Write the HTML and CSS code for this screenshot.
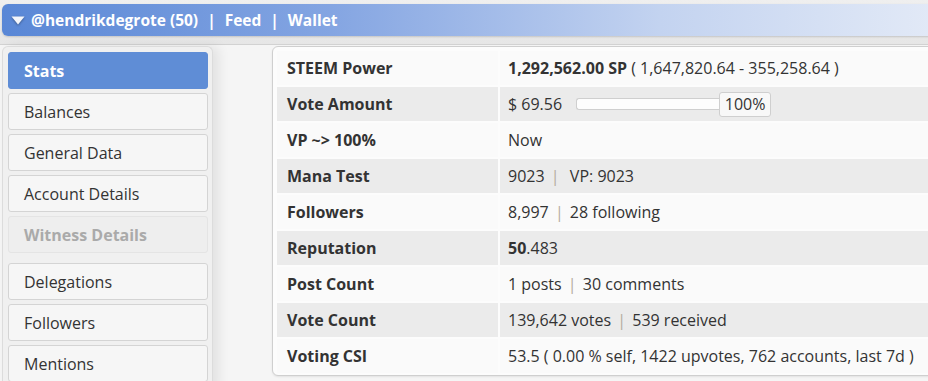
FILE: index.html
```html
<!DOCTYPE html>
<html>
<head>
<meta charset="utf-8">
<link rel="stylesheet" href="styles.css">
</head>
<body>
<div class="top">
  <div class="header">
    <svg class="caret" width="14" height="9" viewBox="0 0 14 9"><path d="M0.5 0.5 H13.5 L7 8.5 Z" fill="#f4f6fb"/></svg>
    <span class="htext">@hendrikdegrote (50)</span>
    <span class="hsep">|</span>
    <span class="htext">Feed</span>
    <span class="hsep">|</span>
    <span class="htext">Wallet</span>
  </div>
</div>
<div class="content">
  <nav class="sidebar">
    <div class="btn active">Stats</div>
    <div class="btn">Balances</div>
    <div class="btn">General Data</div>
    <div class="btn">Account Details</div>
    <div class="btn disabled">Witness Details</div>
    <div class="btn group">Delegations</div>
    <div class="btn">Followers</div>
    <div class="btn">Mentions</div>
  </nav>
  <main class="card">
    <table class="stats">
      <tr><th>STEEM Power</th><td><b>1,292,562.00 SP</b> ( 1,647,820.64 - 355,258.64 )</td></tr>
      <tr><th>Vote Amount</th><td><div class="vote"><span>$ 69.56</span><span class="bar"></span><span class="pct">100%</span></div></td></tr>
      <tr><th>VP ~&gt; 100%</th><td>Now</td></tr>
      <tr><th>Mana Test</th><td>9023 <span class="sep">|</span> &nbsp;VP: 9023</td></tr>
      <tr><th>Followers</th><td>8,997 <span class="sep">|</span> 28 following</td></tr>
      <tr><th>Reputation</th><td><b>50</b>.483</td></tr>
      <tr><th>Post Count</th><td>1 posts <span class="sep">|</span> 30 comments</td></tr>
      <tr><th>Vote Count</th><td>139,642 votes <span class="sep">|</span> 539 received</td></tr>
      <tr><th>Voting CSI</th><td>53.5 ( 0.00 % self, 1422 upvotes, 762 accounts, last 7d )</td></tr>
    </table>
  </main>
</div>
</body>
</html>
```

FILE: styles.css
```css
html, body {
  margin: 0;
  padding: 0;
  overflow: hidden;
}
body {
  width: 928px;
  height: 381px;
  background: #f5f5f5;
  font-family: "Open Sans", "DejaVu Sans", sans-serif;
  font-size: 16px;
  color: #333;
}
.top {
  height: 45px;
  box-sizing: border-box;
  padding: 4px 0 0 2px;
  background: linear-gradient(#efefef, #e6e6e6);
  border-bottom: 1px solid #d2d2d2;
}
.header {
  height: 32px;
  width: 940px;
  box-sizing: border-box;
  border-radius: 6px 0 0 6px;
  background: linear-gradient(to right, #5987d6 0%, #84a5e2 35%, #c3d3f0 70%, #e3eaf7 100%);
  display: flex;
  align-items: center;
  padding-left: 9px;
  color: #fff;
  font-weight: 700;
  font-size: 15.5px;
  box-shadow: 0 1px 2px rgba(0,0,0,0.15);
}
.caret {
  margin-right: 6px;
  margin-top: 1px;
  filter: drop-shadow(0 1px 1px rgba(0,0,0,0.35));
}
.hsep {
  margin: 0 9px;
}
.content {
  display: flex;
  align-items: flex-start;
}
.sidebar {
  flex: none;
  width: 211px;
  height: 345px;
  box-sizing: border-box;
  margin-left: 2px;
  margin-top: 1px;
  padding: 5px 4px 0 5px;
  background: #f0f0f0;
  border: 1px solid #dcdcdc;
  border-bottom: none;
  border-radius: 6px 6px 0 0;
  box-shadow: 6px 0 12px rgba(0,0,0,0.08);
  display: flex;
  flex-direction: column;
  gap: 4px;
}
.btn {
  height: 37px;
  flex: none;
  box-sizing: border-box;
  border: 1px solid #d4d4d4;
  border-radius: 3px;
  background: #f6f6f6;
  padding-left: 15px;
  display: flex;
  align-items: center;
  color: #333;
}
.btn.active {
  background: #5f8dd6;
  border-color: #5f8dd6;
  color: #fff;
  font-weight: 700;
}
.btn.disabled {
  background: #eeeeee;
  border-color: #e4e4e4;
  color: #aaa;
  font-weight: 700;
}
.btn.group {
  margin-top: 6px;
}
.card {
  flex: none;
  margin-left: 59px;
  margin-top: 1px;
  width: 680px;
  box-sizing: border-box;
  background: #fcfcfc;
  border: 1px solid #cfcfcf;
  border-radius: 6px;
  padding: 2px 0 0 2px;
  box-shadow: 0 1px 2px rgba(0,0,0,0.08);
}
.stats {
  border-collapse: separate;
  border-spacing: 2px;
  width: 100%;
}
.stats th, .stats td {
  height: 34px;
  padding: 0 10px;
  text-align: left;
  white-space: nowrap;
  background: #fafafa;
}
.stats th {
  width: 201px;
  font-weight: 700;
}
.stats td {
  padding-left: 8px;
}
.stats tr:nth-child(even) th,
.stats tr:nth-child(even) td {
  background: #ebebeb;
}
.stats b {
  font-weight: 700;
}
.sep {
  color: #b5aca0;
  margin: 0 2px;
}
.vote {
  display: flex;
  align-items: center;
}
.bar {
  display: inline-block;
  width: 142px;
  height: 10px;
  margin-left: 14px;
  border: 1px solid #cfcfcf;
  border-right: none;
  border-radius: 3px 0 0 3px;
  background: #fdfdfd;
}
.pct {
  display: inline-flex;
  align-items: center;
  justify-content: center;
  height: 25px;
  width: 52px;
  box-sizing: border-box;
  border: 1px solid #cfcfcf;
  border-radius: 3px;
  background: #f8f8f8;
}
```
